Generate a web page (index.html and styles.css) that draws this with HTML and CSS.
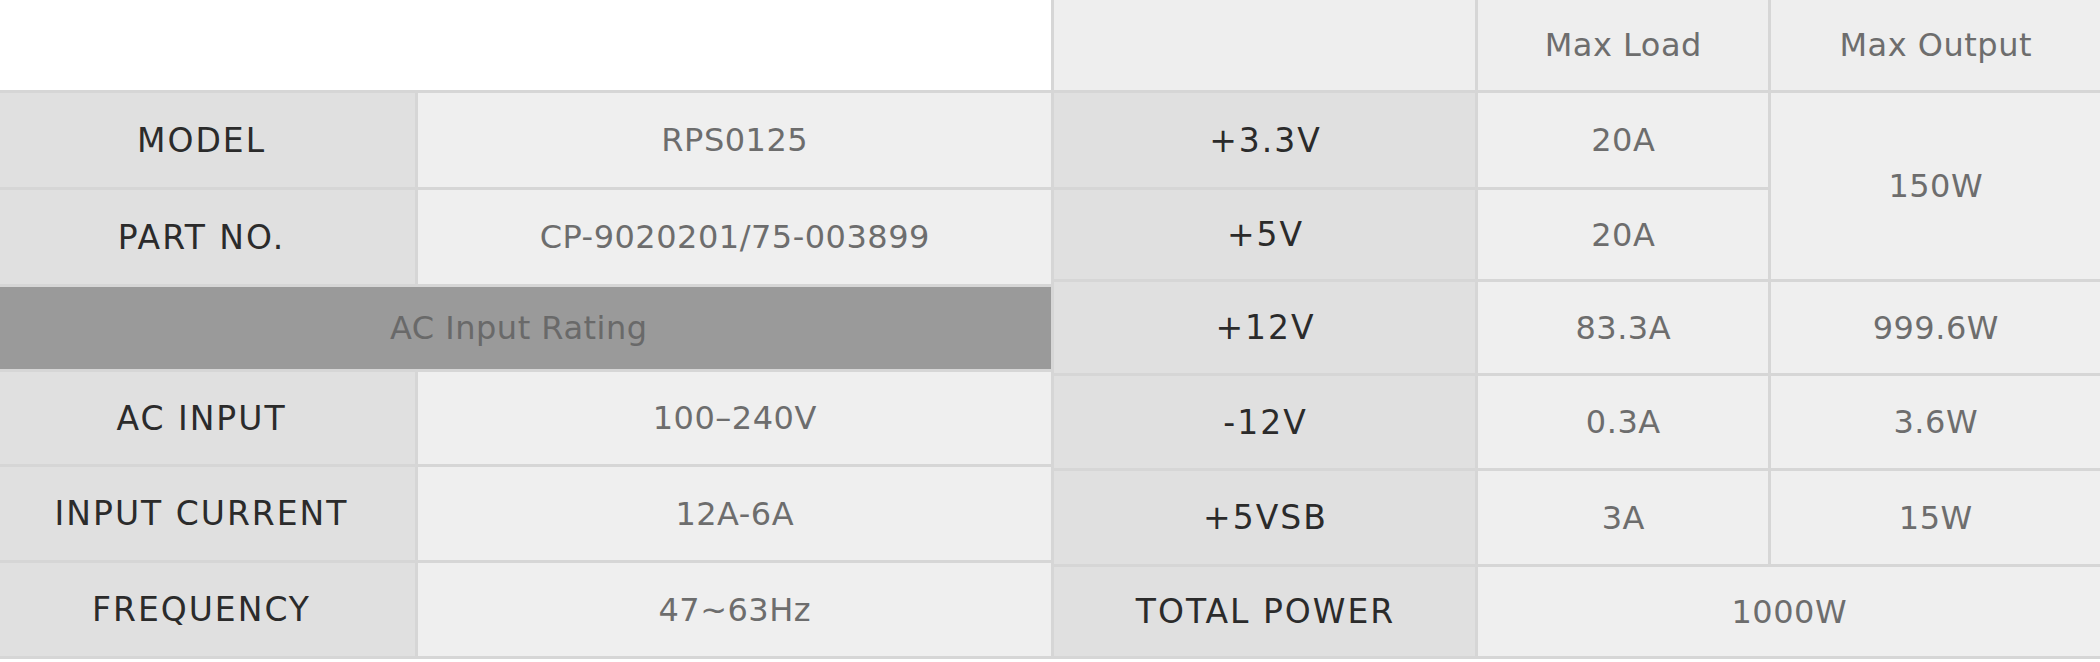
FILE: index.html
```html
<!DOCTYPE html>
<html>
<head>
<meta charset="utf-8">
<link rel="stylesheet" href="styles.css">
</head>
<body>
<div class="page">
  <div class="spec spec-left">
    <div class="cell label">MODEL</div>
    <div class="cell value">RPS0125</div>
    <div class="cell label">PART NO.</div>
    <div class="cell value">CP-9020201/75-003899</div>
    <div class="cell band">AC Input Rating</div>
    <div class="cell label">AC INPUT</div>
    <div class="cell value">100–240V</div>
    <div class="cell label">INPUT CURRENT</div>
    <div class="cell value">12A-6A</div>
    <div class="cell label">FREQUENCY</div>
    <div class="cell value">47~63Hz</div>
  </div>
  <div class="spec spec-right">
    <div class="cell head"></div>
    <div class="cell head">Max Load</div>
    <div class="cell head">Max Output</div>
    <div class="cell label">+3.3V</div>
    <div class="cell value">20A</div>
    <div class="cell value span-rows">150W</div>
    <div class="cell label">+5V</div>
    <div class="cell value">20A</div>
    <div class="cell label">+12V</div>
    <div class="cell value">83.3A</div>
    <div class="cell value">999.6W</div>
    <div class="cell label">-12V</div>
    <div class="cell value">0.3A</div>
    <div class="cell value">3.6W</div>
    <div class="cell label">+5VSB</div>
    <div class="cell value">3A</div>
    <div class="cell value">15W</div>
    <div class="cell label">TOTAL POWER</div>
    <div class="cell value span-cols">1000W</div>
  </div>
</div>
</body>
</html>
```

FILE: styles.css
```css
html, body {
  margin: 0;
  padding: 0;
  background: #ffffff;
  overflow: hidden;
}

.page {
  display: flex;
  align-items: flex-start;
  width: 2100px;
  height: 662px;
  overflow: hidden;
  font-family: "DejaVu Sans", "Liberation Sans", sans-serif;
}

.spec {
  display: grid;
  flex: none;
  gap: 3px;
  background: #d6d6d6;
}

.spec-left {
  width: 1065px;
  margin-left: -14px;
  margin-top: 90px;
  padding: 3px 0;
  grid-template-columns: 429px 633px;
  grid-template-rows: 94px 94px 82px 92px 93px 93px;
}

.spec-right {
  width: 1046px;
  padding: 0 0 3px 3px;
  grid-template-columns: 421px 290px 329px;
  grid-template-rows: 90px 94px 89px 91px 92px 93px 89px;
}

.cell {
  display: flex;
  align-items: center;
  justify-content: center;
  font-size: 32px;
  letter-spacing: 0.5px;
  padding-left: 0.5px;
  background: #efefef;
  color: #6d6d6d;
}

.label {
  background: #e0e0e0;
  color: #2b2b2b;
  font-size: 33px;
  letter-spacing: 2px;
  padding-left: 2px;
}

.value {
  background: #efefef;
  color: #6d6d6d;
}

.head {
  background: #eeeeee;
  color: #6d6d6d;
}

.band {
  grid-column: 1 / span 2;
  background: #9a9a9a;
  color: #696969;
}

.span-rows {
  grid-row: span 2;
}

.span-cols {
  grid-column: span 2;
}
```
